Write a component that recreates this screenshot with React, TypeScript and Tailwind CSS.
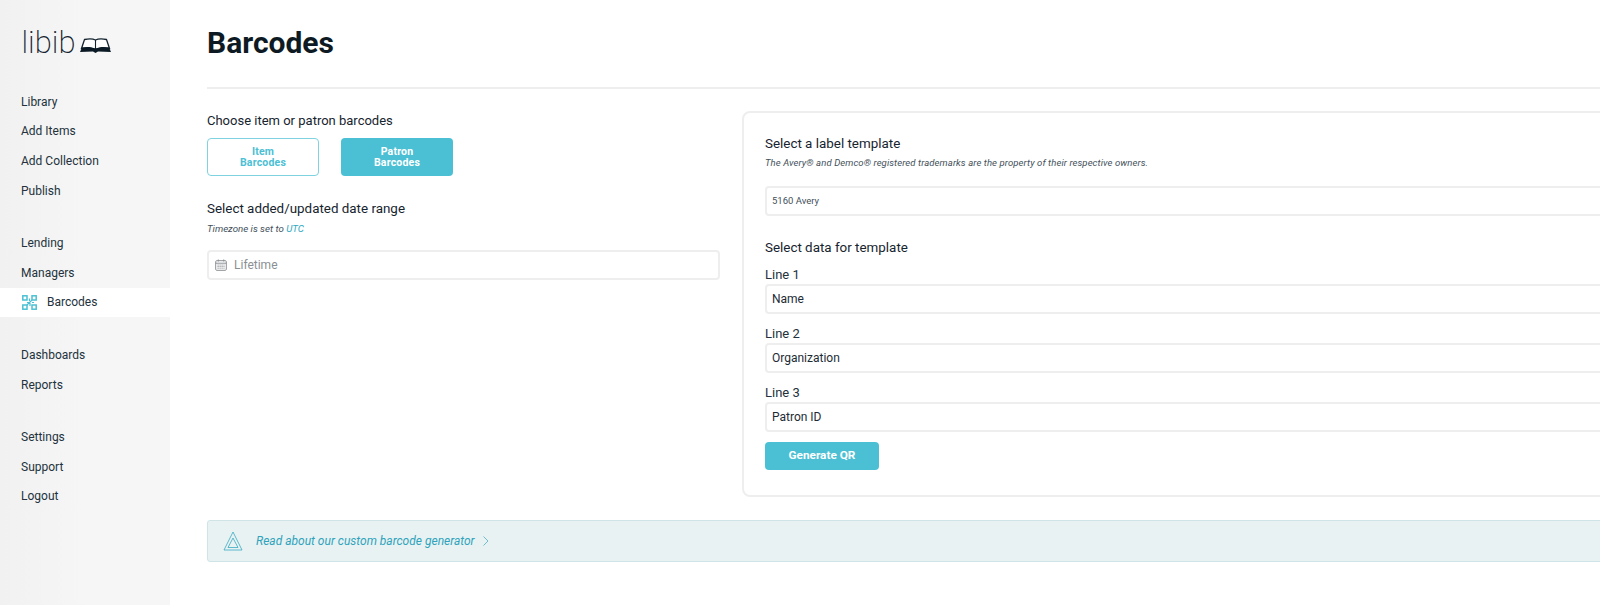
const groups = [
  ["Library", "Add Items", "Add Collection", "Publish"],
  ["Lending", "Managers", "Barcodes"],
  ["Dashboards", "Reports"],
  ["Settings", "Support", "Logout"],
];

function BookLogo() {
  return (
    <svg width="31" height="15" viewBox="0 0 31 15" fill="none" className="ml-[5px] mt-[5px]">
      <path d="M4.5 1.5 C9 0.5 13 0.7 15.5 2 C18 0.7 22 0.5 26.5 1.5 L29.5 10.5 C24 9.5 19 10 15.5 11.5 C12 10 7 9.5 1.5 10.5 Z" stroke="#14242f" strokeWidth="1.3" fill="#fff" />
      <path d="M15.5 2 V11" stroke="#14242f" strokeWidth="1.1" />
      <path d="M0 14 L2 9.5 C7 8.5 12 9 15.5 10.5 C19 9 24 8.5 29 9.5 L31 14 L18 13.6 L15.5 15 L13 13.6 Z" fill="#0b1a25" />
    </svg>
  );
}

function QrIcon() {
  return (
    <svg width="15" height="15" viewBox="0 0 15 15" fill="none" stroke="#4bc0d4" strokeWidth="1.5">
      <rect x="0.8" y="0.8" width="4.2" height="4.2" />
      <rect x="10" y="0.8" width="4.2" height="4.2" />
      <rect x="0.8" y="10" width="4.2" height="4.2" />
      <rect x="10" y="10" width="4.2" height="4.2" />
      <path d="M5 10 L10 5 M7.5 3.5 V6 M5 7.5 H7.5 M8 8 V11 M10 7.5 H12" strokeWidth="1.2" />
    </svg>
  );
}

function CalendarIcon() {
  return (
    <svg width="12" height="12" viewBox="0 0 12 12" fill="none" stroke="#8a8f94" strokeWidth="1">
      <rect x="0.7" y="1.7" width="10.6" height="9.6" rx="1" />
      <path d="M0.7 4.2 H11.3 M3.3 0.5 V2.5 M8.7 0.5 V2.5" />
      <path d="M2.5 6 H9.5 M2.5 7.6 H9.5 M2.5 9.2 H9.5" strokeDasharray="1.2 0.8" />
    </svg>
  );
}

function TriangleIcon() {
  return (
    <svg width="20" height="20" viewBox="0 0 20 20" fill="none" stroke="#39a9c2" strokeWidth="0.8">
      <path d="M10 1 L19 19 H1 Z" />
      <path d="M10 7 L15 16.5 H5 Z" />
    </svg>
  );
}

function Field({ label, value }: { label: string; value: string }) {
  return (
    <div>
      <div className="text-[13px] leading-[18px] text-[#23323c] mt-[10.5px] mb-[0.5px]">{label}</div>
      <div className="h-[30px] border-2 border-[#eeeeee] rounded-[4px] flex items-center pl-[5px] text-[12px] text-[#1d2b35]">{value}</div>
    </div>
  );
}

export default function App() {
  return (
    <div className="w-[1600px] h-[605px] overflow-hidden flex bg-white text-[#16242e]" style={{ fontFamily: "Roboto, sans-serif" }}>
      <aside className="w-[170px] shrink-0 bg-gradient-to-r from-[#f1f1f1] via-[#f6f6f6] to-[#f6f6f6] pt-[27px]">
        <div className="flex items-center pl-[21.5px] h-[32px] mb-[28px]">
          <span className="text-[31px] leading-[32px] font-extralight text-[#14242f]">libib</span>
          <BookLogo />
        </div>
        <nav className="text-[12px] text-[#23323c]">
          {groups.map((g) => (
            <div key={g[0]} className="mb-[23px]">
              {g.map((n) =>
                n === "Barcodes" ? (
                  <div key={n} className="h-[29.6px] flex items-center bg-white pl-[22px] gap-[10px]">
                    <QrIcon />
                    {n}
                  </div>
                ) : (
                  <div key={n} className="h-[29.6px] flex items-center pl-[21px]">{n}</div>
                )
              )}
            </div>
          ))}
        </nav>
      </aside>
      <main className="flex-1 pl-[37px] min-w-0">
        <h1 className="text-[30px] leading-[36px] font-bold mt-[25px] text-[#0d1a23]">Barcodes</h1>
        <div className="w-[1600px] h-[2px] bg-[#eeeeee] mt-[26px]" />
        <div className="flex mt-[22px] w-[1600px] gap-[22px]">
          <section className="w-[513px] shrink-0">
            <div className="text-[13px] leading-[20px]">Choose item or patron barcodes</div>
            <div className="flex gap-[22px] mt-[7px]">
              <button className="w-[112px] h-[38px] border border-[#7fd3e1] rounded-[4px] text-[#4bc0d4] text-[10.5px] leading-[11px] font-bold tracking-[0.2px]">Item<br />Barcodes</button>
              <button className="w-[112px] h-[38px] bg-[#4bc0d4] rounded-[4px] text-white text-[10.5px] leading-[11px] font-bold tracking-[0.2px]">Patron<br />Barcodes</button>
            </div>
            <div className="text-[13.4px] leading-[20px] mt-[23px]">Select added/updated date range</div>
            <div className="text-[9.7px] leading-[14px] italic text-[#43505a] mt-[3px]">Timezone is set to <span className="text-[#2fa8c0]">UTC</span></div>
            <div className="h-[30px] border-2 border-[#eeeeee] rounded-[4px] mt-[14px] flex items-center pl-[6px] gap-[7px] text-[12px] text-[#8a8f94]">
              <CalendarIcon />
              Lifetime
            </div>
          </section>
          <section className="flex-1 h-[386px] border-2 border-[#eeeeee] rounded-[8px] pl-[21px] pt-[21px]">
            <div className="text-[13.4px] leading-[20px]">Select a label template</div>
            <div className="text-[9.5px] leading-[14px] italic text-[#43505a] mt-[2px] tracking-[0.1px]">The Avery® and Demco® registered trademarks are the property of their respective owners.</div>
            <div className="h-[30px] border-2 border-[#eeeeee] rounded-[4px] mt-[16px] flex items-center pl-[5px] text-[9.5px] text-[#43505a]">5160 Avery</div>
            <div className="text-[13.4px] leading-[20px] mt-[22px]">Select data for template</div>
            <div className="mt-[-3px]">
              <Field label="Line 1" value="Name" />
              <Field label="Line 2" value="Organization" />
              <Field label="Line 3" value="Patron ID" />
            </div>
            <button className="mt-[10px] w-[114px] h-[28px] bg-[#4bc0d4] rounded-[4px] text-white text-[11.8px] font-bold">Generate QR</button>
          </section>
        </div>
        <div className="w-[1600px] h-[42px] mt-[23px] border border-[#cfe4e7] bg-[#e8f2f3] rounded-[3px] flex items-center pl-[15px] text-[12px] italic text-[#2fa3bb]">
          <TriangleIcon />
          <span className="ml-[13px]">Read about our custom barcode generator</span>
          <svg width="8" height="12" viewBox="0 0 8 12" fill="none" stroke="#6fbccd" strokeWidth="1" className="ml-[7px]"><path d="M1.5 1.5 L6 6 L1.5 10.5" /></svg>
        </div>
      </main>
    </div>
  );
}
